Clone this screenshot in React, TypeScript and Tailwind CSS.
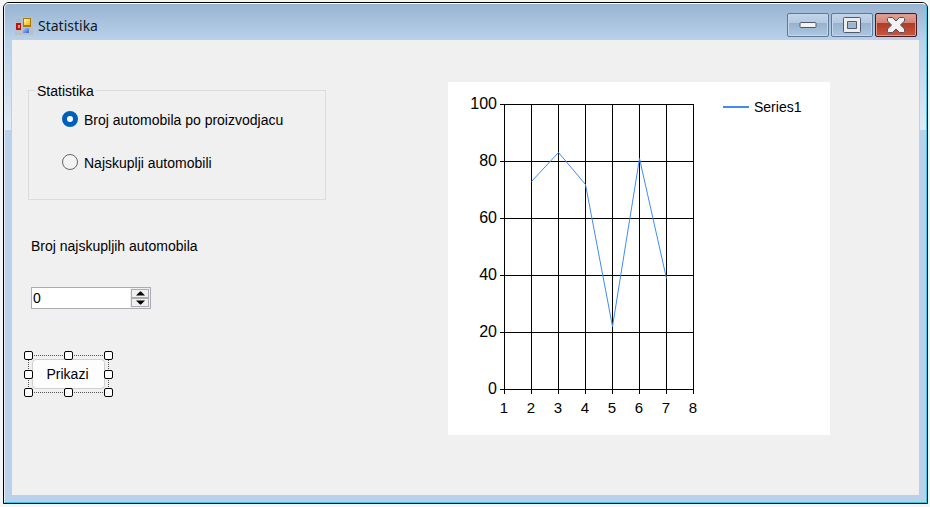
import { useState } from "react";

const xLabels = [1, 2, 3, 4, 5, 6, 7, 8];
const yLabels = [100, 80, 60, 40, 20, 0];
const values = [73, 83, 72, 22, 81, 39];

const gridX = (v: number) => 56 + (v - 1) * 27;
const gridY = (v: number) => 307 - Math.round(v * 2.85);

function FormIcon() {
  return (
    <svg width="18" height="18" viewBox="0 0 18 18" aria-hidden="true">
      <defs>
        <linearGradient id="gold" x1="0" y1="0" x2="1" y2="1">
          <stop offset="0" stopColor="#fff2a8" />
          <stop offset="1" stopColor="#f0b90c" />
        </linearGradient>
        <linearGradient id="sky" x1="0" y1="0" x2="1" y2="1">
          <stop offset="0" stopColor="#a9cdff" />
          <stop offset="1" stopColor="#2a63d0" />
        </linearGradient>
      </defs>
      <rect width="18" height="18" fill="#bcbfc5" />
      <rect x="1" y="1" width="5" height="4" fill="#a6bbd3" />
      <rect x="1" y="14" width="6" height="3" fill="#b3c3d8" />
      <rect x="1" y="6" width="5" height="7" fill="#b01810" />
      <rect x="3" y="8" width="2" height="3" fill="#f08a80" />
      <rect x="8" y="1" width="8" height="9" fill="#a87a08" />
      <rect x="9" y="2" width="6" height="6" fill="url(#gold)" />
      <rect x="8" y="11" width="6" height="5" fill="url(#sky)" />
    </svg>
  );
}

const captionButton =
  "flex h-6 w-[42px] items-center justify-center rounded-[2px] border border-[#5f7897] bg-[linear-gradient(#c3d4e7,#b3c8e0_42%,#98b1cd_42%,#adc6e2)] shadow-[inset_0_0_0_1px_#c3d6ea]";

function TitleBar() {
  return (
    <header className="flex h-9 items-start justify-between pt-[9px] pr-[2px] pl-[3px]">
      <div className="flex items-center gap-[5px] pt-[2px]">
        <FormIcon />
        <h1 className="pt-px font-['Noto_Sans',sans-serif] text-[14px] leading-5 text-[#101820]">Statistika</h1>
      </div>
      <div className="flex gap-[2px]">
        <button aria-label="Minimize" className={captionButton}>
          <svg width="18" height="8" viewBox="0 0 18 8">
            <rect x="1" y="1.5" width="16" height="5" rx="1" fill="#f4f4f4" stroke="#50596b" />
          </svg>
        </button>
        <button aria-label="Maximize" className={captionButton}>
          <svg width="18" height="16" viewBox="0 0 18 16">
            <path
              d="M1.500.5h15q1 0 1 1v13q0 1-1 1h-15q-1 0-1-1v-13q0-1 1-1zM4.500 4.500v7h9v-7z"
              fill="#ededed"
              fillRule="evenodd"
              stroke="#50596b"
            />
          </svg>
        </button>
        <button
          aria-label="Close"
          className="flex h-6 w-[42px] items-center justify-center rounded-[2px] border border-[#4a1820] bg-[linear-gradient(#e3a193,#d08274_42%,#b23a22_42%,#c4583f)] shadow-[inset_0_0_0_1px_#dd9a8c]"
        >
          <svg width="18" height="16" viewBox="0 0 18 16">
            <path
              d="M1.500.5h4l3.500 3.500 3.500-3.500h4l1 1v2.500l-4 4 4 4v2.500l-1 1h-4l-3.500-3.500-3.500 3.500h-4l-1-1v-2.500l4-4-4-4v-2.500z"
              fill="#f2f2f2"
              stroke="#50505f"
              strokeLinejoin="round"
            />
          </svg>
        </button>
      </div>
    </header>
  );
}

function RadioRow({ label, checked, onSelect }: { label: string; checked: boolean; onSelect: () => void }) {
  return (
    <label className="flex items-center gap-[6px]">
      <input
        type="radio"
        name="statistic"
        checked={checked}
        onChange={onSelect}
        className="size-4 appearance-none rounded-full border border-[#666] bg-[#f3f3f3] checked:border-5 checked:border-[#005fb8] checked:bg-white"
      />
      <span className="pt-[2px]">{label}</span>
    </label>
  );
}

const handle = "absolute size-[9px] rounded-[2px] border border-black bg-white";

function SelectedButton() {
  return (
    <div className="relative mt-[46px] ml-4 w-fit border border-dotted border-[#555] p-[3px]">
      <button className="h-[30px] w-[73px] rounded-[4px] border border-[#d0d0d0] bg-[#fdfdfd] pr-[2px]">Prikazi</button>
      <span className={`${handle} -top-[5px] -left-[5px]`} />
      <span className={`${handle} -top-[5px] left-[35px]`} />
      <span className={`${handle} -top-[5px] -right-[5px]`} />
      <span className={`${handle} top-[14px] -left-[5px]`} />
      <span className={`${handle} top-[14px] -right-[5px]`} />
      <span className={`${handle} -bottom-[5px] -left-[5px]`} />
      <span className={`${handle} -bottom-[5px] left-[35px]`} />
      <span className={`${handle} -right-[5px] -bottom-[5px]`} />
    </div>
  );
}

function Chart() {
  const line = values.map((v, i) => `${gridX(i + 2) + 0.5},${gridY(v) + 0.5}`).join(" ");
  return (
    <figure className="flex h-[353px] w-[382px] items-start bg-white" aria-label="Series1">
      <svg width="260" height="353" viewBox="0 0 260 353" className="shrink-0">
        <g stroke="#000" shapeRendering="crispEdges">
          {yLabels.map((v) => (
            <line key={v} x1="52" x2="246" y1={gridY(v) + 0.5} y2={gridY(v) + 0.5} />
          ))}
          {xLabels.map((v) => (
            <line key={v} x1={gridX(v) + 0.5} x2={gridX(v) + 0.5} y1="22" y2="312" />
          ))}
        </g>
        <polyline points={line} fill="none" stroke="#418cf0" />
        <g fontSize="16" textAnchor="end">
          {yLabels.map((v) => (
            <text key={v} x="49" y={gridY(v) + 5}>{v}</text>
          ))}
        </g>
        <g fontSize="15" textAnchor="middle">
          {xLabels.map((v) => (
            <text key={v} x={gridX(v)} y="331">{v}</text>
          ))}
        </g>
      </svg>
      <figcaption className="mt-4 ml-[15px] flex items-center gap-[5px]">
        <span className="h-[2px] w-[26px] bg-[#418cf0]" />
        Series1
      </figcaption>
    </figure>
  );
}

const spinButton = "flex flex-1 items-center justify-center border border-[#abadb3]";

export default function App() {
  const [choice, setChoice] = useState(0);
  const [count, setCount] = useState(0);
  return (
    <div className="flex min-h-screen flex-col bg-[#f5f5f5] pt-[2px] pr-[2px] pb-[3px] pl-[3px] font-['Liberation_Sans',Arial,sans-serif] text-[14px] leading-[18px] text-black">
      <div className="flex flex-1 flex-col rounded-t-[6px] border border-black bg-[#b9d1ea]">
        <div className="flex flex-1 flex-col rounded-t-[5px] border border-t-white border-r-[#22d3ee] border-b-[#22d3ee] border-l-[#e6eef7] bg-[linear-gradient(#b9d1ea,#dfeaf6),linear-gradient(#b9d1ea,#dfeaf6),linear-gradient(#99b4d1,#b9d1ea_36px)] bg-[length:6px_90px,6px_90px,100%_100%] bg-[position:0_36px,100%_36px,0_0] bg-no-repeat px-[7px] pb-[7px]">
          <TitleBar />
          <main className="flex flex-1 justify-between bg-[#f0f0f0] pr-[89px]">
            <div>
              <fieldset className="mt-[41px] ml-4 h-[119px] w-[298px] border border-[#dcdcdc] pl-[33px]">
                <legend className="-ml-[27px] px-[2px] pt-px">Statistika</legend>
                <div className="flex flex-col gap-[23px] pt-[9px]">
                  <RadioRow label="Broj automobila po proizvodjacu" checked={choice === 0} onSelect={() => setChoice(0)} />
                  <RadioRow label="Najskuplji automobili" checked={choice === 1} onSelect={() => setChoice(1)} />
                </div>
              </fieldset>
              <label htmlFor="count" className="mt-[37px] ml-[19px] block w-fit">Broj najskupljih automobila</label>
              <div className="mt-8 ml-[19px] flex h-[22px] w-[120px] border border-[#abadb3] bg-white">
                <input
                  id="count"
                  value={count}
                  onChange={(e) => setCount(Number(e.target.value) || 0)}
                  className="min-w-0 flex-1 bg-white pl-px leading-4 outline-none"
                />
                <div className="flex w-5 flex-col bg-[#f0f0f0] p-px">
                  <button aria-label="Increase" onClick={() => setCount(count + 1)} className={spinButton}>
                    <svg width="9" height="5" viewBox="0 0 9 5"><path d="M0 4.500 4 .5h1l4 4z" /></svg>
                  </button>
                  <button aria-label="Decrease" onClick={() => setCount(count - 1)} className={spinButton}>
                    <svg width="9" height="5" viewBox="0 0 9 5"><path d="M0 .5h9l-4 4H4z" /></svg>
                  </button>
                </div>
              </div>
              <SelectedButton />
            </div>
            <div className="pt-[42px]">
              <Chart />
            </div>
          </main>
        </div>
      </div>
    </div>
  );
}
